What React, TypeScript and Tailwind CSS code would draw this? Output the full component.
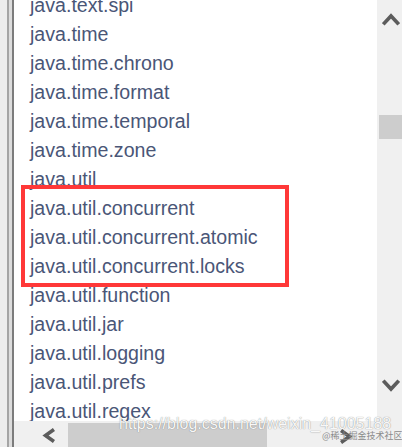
import React from 'react';

const packages = [
  'java.text.spi',
  'java.time',
  'java.time.chrono',
  'java.time.format',
  'java.time.temporal',
  'java.time.zone',
  'java.util',
  'java.util.concurrent',
  'java.util.concurrent.atomic',
  'java.util.concurrent.locks',
  'java.util.function',
  'java.util.jar',
  'java.util.logging',
  'java.util.prefs',
  'java.util.regex',
];

function Chevron({ dir }: { dir: 'up' | 'down' | 'left' | 'right' }) {
  if (dir === 'up' || dir === 'down') {
    const d = dir === 'up' ? 'M2.5 11 L9 4 L15.5 11' : 'M2.5 3 L9 10 L15.5 3';
    return (
      <svg width="18" height="14" viewBox="0 0 18 14">
        <path d={d} fill="none" stroke="#5c5c5c" strokeWidth="3.6" strokeLinecap="square" />
      </svg>
    );
  }
  const d = dir === 'left' ? 'M10.5 2.5 L3.5 7.5 L10.5 12.5' : 'M2.5 2.5 L9.5 7.5 L2.5 12.5';
  return (
    <svg width="13" height="15" viewBox="0 0 13 15">
      <path d={d} fill="none" stroke="#5c5c5c" strokeWidth="3.6" strokeLinecap="square" />
    </svg>
  );
}

export default function App() {
  return (
    <div className="relative w-[402px] h-[447px] overflow-hidden flex bg-white font-['Liberation_Sans',Arial,sans-serif]">
      {/* left frame edge */}
      <div className="flex h-full shrink-0">
        <div className="w-[7px] bg-[#ececec]"></div>
        <div className="w-[2px] bg-[#a4a4a4]"></div>
        <div className="w-[3px] bg-[#dcdcdc]"></div>
        <div className="w-[2px] bg-[#7c7c7c]"></div>
      </div>

      <div className="flex-1 flex flex-col min-w-0">
        <div className="flex flex-1 min-h-0">
          <div className="flex-1 overflow-hidden">
            <ul className="-mt-[9px] pl-[16px]">
              {packages.map(p => (
                <li key={p} className="h-[29px] flex items-center text-[19.6px] text-[#4a5677] whitespace-nowrap">
                  {p}
                </li>
              ))}
            </ul>
          </div>

          {/* vertical scrollbar */}
          <div className="w-[25px] bg-[#f0f0f0] flex flex-col">
            <div className="h-[38px] flex items-center justify-end pr-[2px]">
              <Chevron dir="up" />
            </div>
            <div className="mt-[77px] ml-[2px] h-[24px] bg-[#cdcdcd]"></div>
            <div className="flex-1"></div>
            <div className="h-[30px] mb-[20px] flex items-center justify-end pr-[2px]">
              <Chevron dir="down" />
            </div>
          </div>
        </div>

        {/* horizontal scrollbar */}
        <div className="h-[26px] flex bg-[#f0f0f0]">
          <div className="w-[54px] flex items-center pl-[28px] pt-[2px]">
            <Chevron dir="left" />
          </div>
          <div className="w-[199px] mt-[2px] bg-[#cdcdcd]"></div>
          <div className="flex-1 flex items-center pl-[73px] pt-[4px]">
            <Chevron dir="right" />
          </div>
        </div>
      </div>

      {/* red annotation box */}
      <div className="absolute left-[21px] top-[185px] w-[268px] h-[102px] border-[4px] border-[#ff3838]"></div>

      {/* watermarks */}
      <div className="absolute left-[119px] top-[412px] text-[16px] text-[#f8f8f8] whitespace-nowrap [text-shadow:0_0_1px_rgba(0,0,0,0.5)]">
        https://blog.csdn.net/weixin_41005188
      </div>
      <div className="absolute left-[322px] top-[430px] text-[9px] leading-[12px] text-[#8a8a8a] whitespace-nowrap font-['Noto_Sans_CJK_SC',sans-serif]">
        @稀土掘金技术社区
      </div>
    </div>
  );
}
